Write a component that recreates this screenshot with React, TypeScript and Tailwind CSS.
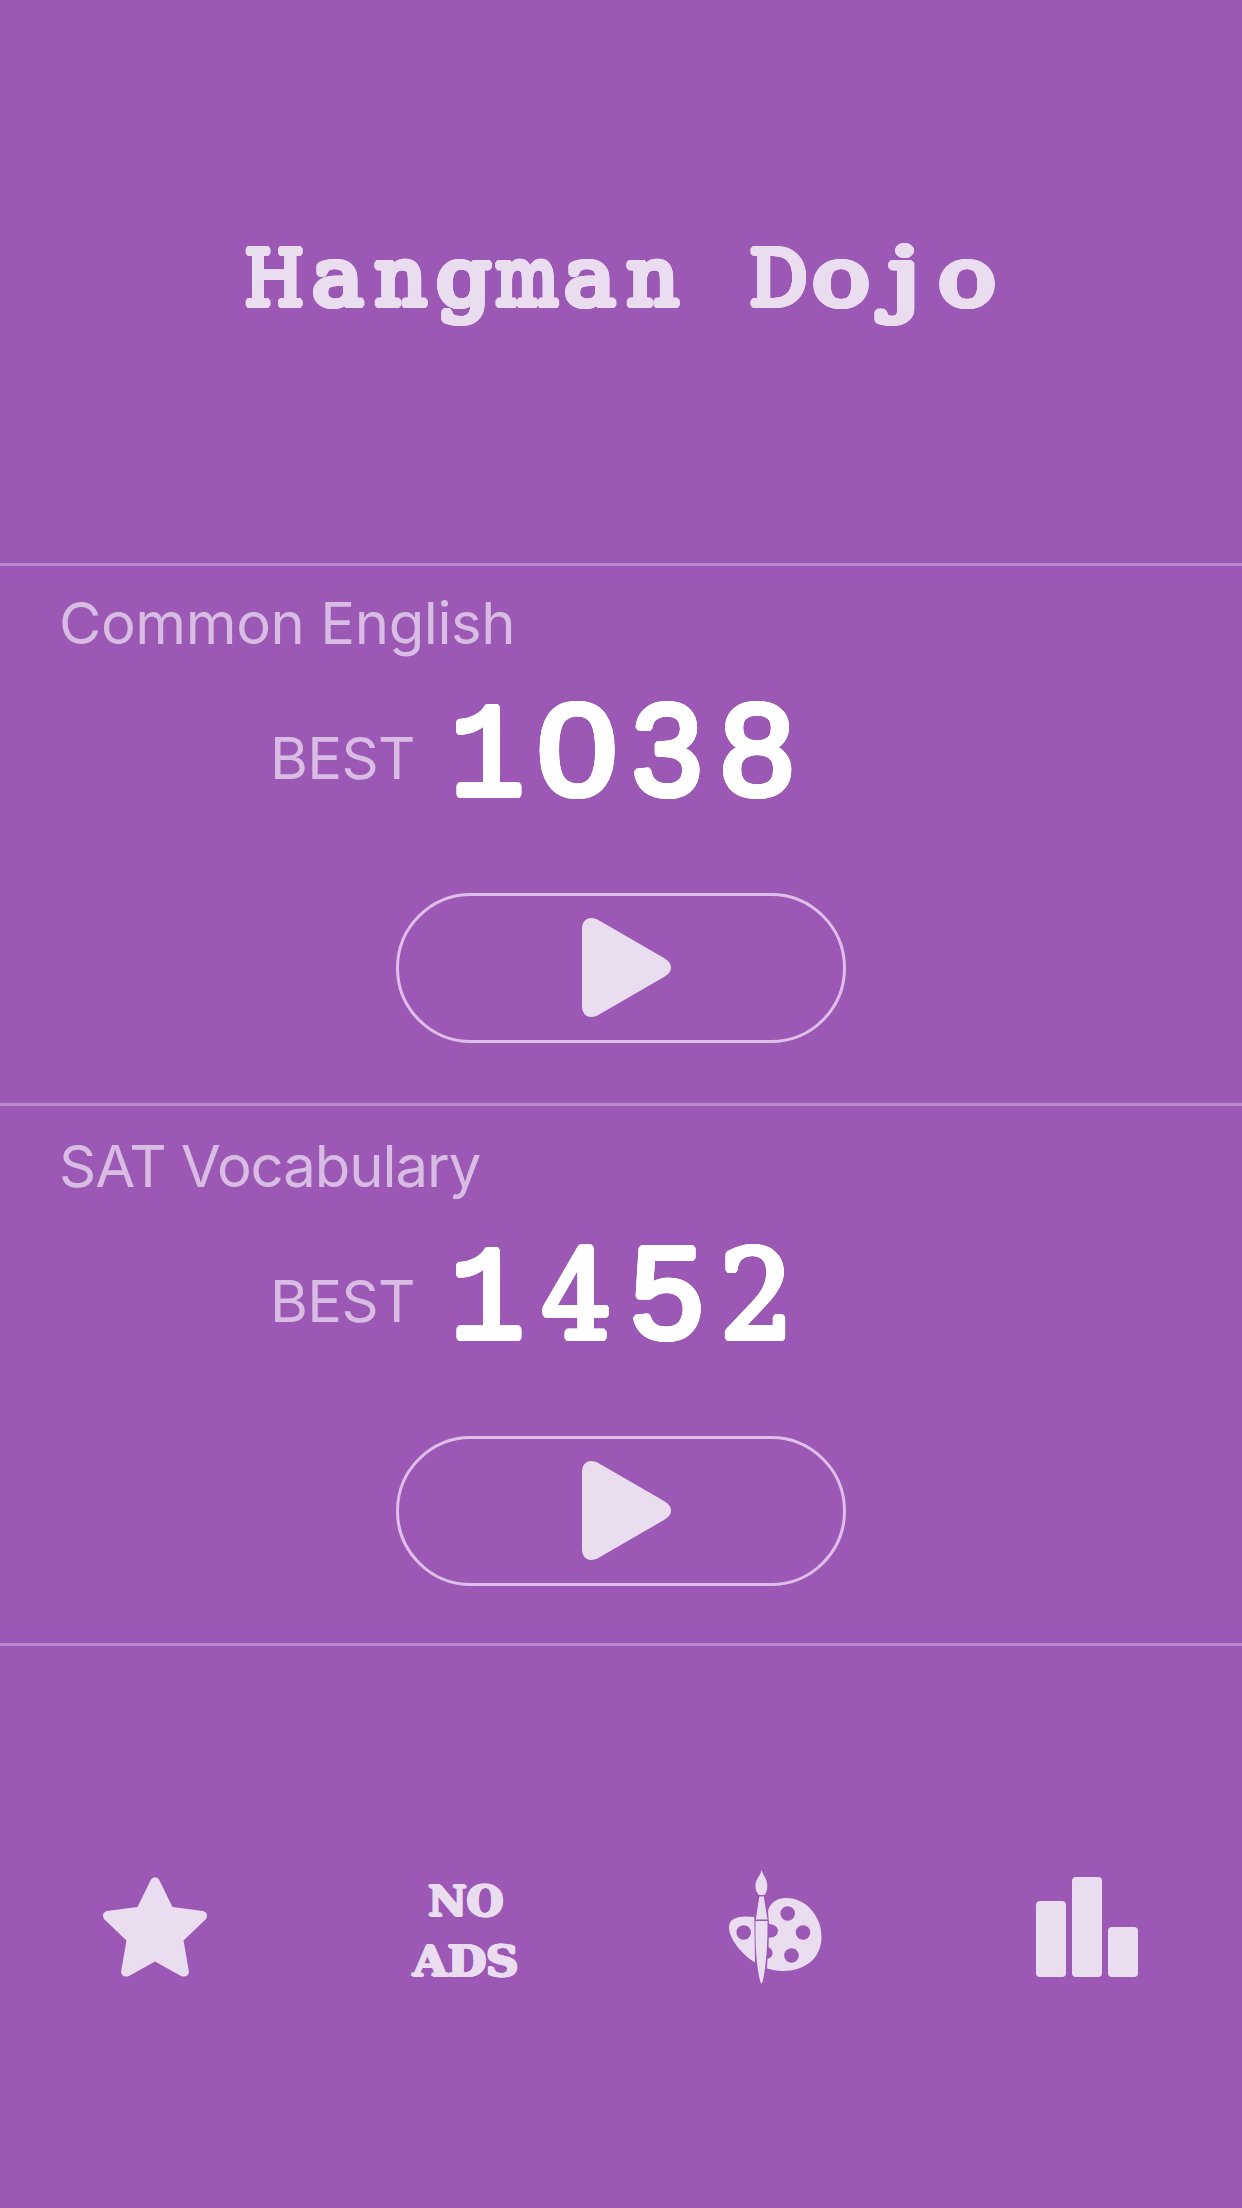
import React from "react";

type Glyph = { ch: string; cls: string };

const ROUNDED =
  "[text-shadow:3px_0_0_currentColor,-3px_0_0_currentColor,0_3px_0_currentColor,0_-3px_0_currentColor,2.1px_2.1px_0_currentColor,-2.1px_2.1px_0_currentColor,2.1px_-2.1px_0_currentColor,-2.1px_-2.1px_0_currentColor,2.8px_1.2px_0_currentColor,-2.8px_1.2px_0_currentColor,2.8px_-1.2px_0_currentColor,-2.8px_-1.2px_0_currentColor,1.2px_2.8px_0_currentColor,-1.2px_2.8px_0_currentColor,1.2px_-2.8px_0_currentColor,-1.2px_-2.8px_0_currentColor]";

const title: Glyph[] = [
  { ch: "H", cls: "text-[76px] scale-x-[0.89]" },
  { ch: "a", cls: "text-[80px] scale-x-[1.08]" },
  { ch: "n", cls: "text-[80px] scale-x-[1.02]" },
  { ch: "g", cls: "text-[80px] scale-x-[1.08]" },
  { ch: "m", cls: "text-[80px] scale-x-[0.83]" },
  { ch: "a", cls: "text-[80px] scale-x-[1.08]" },
  { ch: "n", cls: "text-[80px] scale-x-[1.02]" },
  { ch: " ", cls: "text-[80px]" },
  { ch: "D", cls: "text-[76px] scale-x-[0.95]" },
  { ch: "o", cls: "text-[80px] scale-x-[1.2]" },
  { ch: "j", cls: "text-[80px] scale-x-[1.3]" },
  { ch: "o", cls: "text-[80px] scale-x-[1.2]" },
];

const digit: Record<string, string> = {
  "0": "font-['Liberation_Sans'] text-[130px] scale-x-[1.1]",
  "1": "font-['Liberation_Mono'] text-[134px] scale-x-[0.93]",
  "2": "font-['DejaVu_Serif'] text-[122px] scale-x-[0.95]",
  "3": "font-['Liberation_Sans'] text-[130px] scale-x-[0.97]",
  "4": "font-['DejaVu_Serif'] text-[122px] scale-x-[0.9]",
  "5": "font-['Liberation_Sans'] text-[130px] scale-x-[1]",
  "8": "font-['Liberation_Sans'] text-[130px] scale-x-[1.02]",
};

function Title() {
  return (
    <h1 className={`flex h-[120px] items-baseline whitespace-pre font-['DejaVu_Serif',serif] leading-[120px] text-[#eaddf0] ${ROUNDED}`}>
      {title.map((g, i) => (
        <span key={i} className="flex w-[63px] justify-center">
          <span className={`inline-block shrink-0 ${g.cls}`}>{g.ch}</span>
        </span>
      ))}
    </h1>
  );
}

function PlayButton() {
  return (
    <button aria-label="Play" className="flex h-[150px] w-[450px] items-center justify-center rounded-full border-3 border-[#dfbfe9]">
      <svg width="89" height="99" viewBox="0 0 89 99" className="mb-[1px] ml-[11px]" fill="#eaddf0">
        <path d="M0 11C0 4 4 0 9 0C12 0 15 1 18 3L82 40C87 43 89 46 89 49.5C89 53 87 56 82 59L18 96C15 98 12 99 9 99C4 99 0 95 0 88Z" />
      </svg>
    </button>
  );
}

function Mode({ name, best, className }: { name: string; best: string; className: string }) {
  return (
    <section className={`flex h-[540px] flex-col border-t-3 border-[#bb89cb] ${className}`}>
      <h2 className="ml-[59px] h-[80px] whitespace-nowrap font-['Inter',sans-serif] text-[58px] leading-[78px] text-[#d9bce3]">
        {name}
      </h2>
      <div className="ml-[270px] flex h-[150px] items-start">
        <span className="mt-[55px] w-[172px] font-['Inter',sans-serif] text-[58px] leading-[78px] tracking-[-0.7px] text-[#d9bce3]">BEST</span>
        <span className={`mt-[11px] flex h-[150px] items-baseline leading-[150px] tracking-normal text-white ${ROUNDED}`}>
          {best.split("").map((d, i) => (
            <span key={i} className="flex w-[90px] justify-center">
              <span className={`inline-block shrink-0 ${digit[d]}`}>{d}</span>
            </span>
          ))}
        </span>
      </div>
      <div className="mt-[79px] flex justify-center">
        <PlayButton />
      </div>
    </section>
  );
}

function Star() {
  return (
    <svg width="104" height="100" viewBox="0 0 104 100" fill="#eaddf0">
      <path d="M48 2.5Q52 -2 56 2.5L69.500 30L100 34Q106 36 103 42L80.500 63.500L86 95Q84.500 101 78 99L52 84.500L26 99Q19.500 101 18 95L23.500 63.500L1 42Q-2 36 4 34L34.500 30Z" />
    </svg>
  );
}

function Palette() {
  return (
    <svg width="93" height="115" viewBox="0 0 93 115" className="mr-[2px]" fill="#eaddf0">
      <path
        fillRule="evenodd"
        d="M25.300 47C17 46 8 46 3 50C-2 55 0 63 4 70C9 79 17 87 26 92.500ZM22 62.500A7.300 7.300 0 1 0 7.400 62.500A7.300 7.300 0 1 0 22 62.500Z"
      />
      <path
        fillRule="evenodd"
        d="M39 41C41 32 49 28 57 28C77 28 92.500 46 92.500 67C92.500 89 75 101 54 101C48 101 43 100 38 98.500L38.500 89C42 88 43.500 86 43.500 83.500C43.500 80 42 78.500 39.500 77L39.800 67.500C45 68 49 65 49 61C49 57 45 54 40 54ZM66 43.500A7.300 7.300 0 1 0 51.400 43.500A7.300 7.300 0 1 0 66 43.500ZM81.300 62.500A7.300 7.300 0 1 0 66.700 62.500A7.300 7.300 0 1 0 81.300 62.500ZM69.800 85.500A7.300 7.300 0 1 0 55.200 85.500A7.300 7.300 0 1 0 69.800 85.500Z"
      />
      <path d="M32.500 0C34 5 38.300 9 38.300 16C38.300 20 37 23.500 35.300 25H30C28 23 26.400 20 26.400 16C26.400 9 32 5 32.500 0ZM30.300 26.500H34.800L38.500 49.500H26.800ZM26.500 51H38.500C38.800 77 36.500 101 33.500 112Q32.500 115 31.500 112C28 101 26 77 26.500 51Z" />
    </svg>
  );
}

function Bars() {
  return (
    <div className="flex h-[100px] items-end gap-1.5">
      <div className="h-[76px] w-[30px] rounded-[4px] bg-[#eaddf0]" />
      <div className="h-[100px] w-[30px] rounded-[4px] bg-[#eaddf0]" />
      <div className="h-[50px] w-[30px] rounded-[4px] bg-[#eaddf0]" />
    </div>
  );
}

export default function App() {
  return (
    <main className="flex h-[2208px] w-[1242px] flex-col overflow-hidden bg-[#9b58b4]">
      <header className="flex h-[563px] justify-center pt-[218px]">
        <Title />
      </header>
      <Mode name="Common English" best="1038" className="pt-[18px] tracking-[-0.4px]" />
      <Mode name="SAT Vocabulary" best="1452" className="pt-[21px] tracking-[-1.05px]" />
      <footer className="flex flex-1 border-t-3 border-[#bb89cb] pt-[224px]">
        <div className="flex flex-1 justify-center pt-[7px]">
          <Star />
        </div>
        <div className="flex flex-1 flex-col items-center pt-[2px] font-['DejaVu_Serif',serif] text-[42px] font-bold leading-[60px] text-[#eaddf0] [text-shadow:1.5px_0_0_currentColor,-1.5px_0_0_currentColor,0_1px_0_currentColor,0_-1px_0_currentColor,1px_1px_0_currentColor,-1px_-1px_0_currentColor]">
          <span>NO</span>
          <span className="origin-center scale-x-[1.06]">ADS</span>
        </div>
        <div className="flex flex-1 justify-center">
          <Palette />
        </div>
        <div className="flex flex-1 justify-center pt-[7px]">
          <Bars />
        </div>
      </footer>
    </main>
  );
}
